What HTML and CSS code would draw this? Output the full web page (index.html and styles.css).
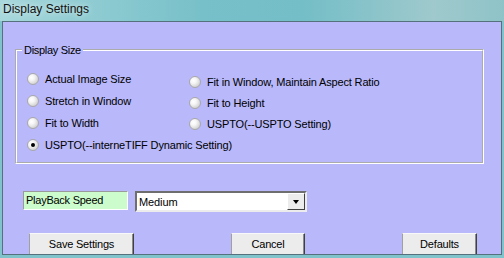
FILE: index.html
```html
<!DOCTYPE html>
<html lang="en">
<head>
    <meta charset="UTF-8">
    <title>Display Settings</title>
    <link rel="stylesheet" href="styles.css">
</head>
<body>
    <div class="window">
        <div class="titlebar">Display Settings</div>
        <div class="client">
            <fieldset class="group">
                <legend>Display Size</legend>
                <div class="options">
                    <div class="col col-left">
                        <label class="opt"><span class="radio"></span>Actual Image Size</label>
                        <label class="opt"><span class="radio"></span>Stretch in Window</label>
                        <label class="opt"><span class="radio"></span>Fit to Width</label>
                        <label class="opt"><span class="radio checked"></span>USPTO(--interneTIFF Dynamic Setting)</label>
                    </div>
                    <div class="col col-right">
                        <label class="opt"><span class="radio"></span>Fit in Window, Maintain Aspect Ratio</label>
                        <label class="opt"><span class="radio"></span>Fit to Height</label>
                        <label class="opt"><span class="radio"></span>USPTO(--USPTO Setting)</label>
                    </div>
                </div>
            </fieldset>

            <div class="speed-row">
                <div class="speed-label">PlayBack Speed</div>
                <div class="combo">
                    <span class="combo-text">Medium</span>
                    <span class="combo-btn"><span class="tri"></span></span>
                </div>
            </div>

            <div class="buttons">
                <button class="btn btn-save">Save Settings</button>
                <button class="btn btn-cancel">Cancel</button>
                <button class="btn btn-defaults">Defaults</button>
            </div>
        </div>
    </div>
</body>
</html>
```

FILE: styles.css
```css
body {
    margin: 0;
    font-family: "Liberation Sans", Arial, sans-serif;
    font-size: 11px;
    color: #000;
}
.window {
    width: 504px;
    height: 258px;
    background: #80c3cb;
    display: flex;
    flex-direction: column;
    overflow: hidden;
}
.titlebar {
    height: 21px;
    line-height: 18px;
    padding-left: 3px;
    font-size: 12px;
    color: #111;
    text-shadow: 0 0 6px rgba(255, 255, 255, 0.8);
    background: linear-gradient(90deg, #a7d8dc 0%, #92cdd3 15%, #78c0c9 40%, #74bec7 60%, #8cc4ca 75%, #9fc9cc 86%, #8ec3c8 100%);
}
.client {
    margin: 0 2px;
    height: 234px;
    box-sizing: border-box;
    border: 1px solid #56717e;
    background: #b8b8fa;
    overflow: hidden;
}
.group {
    margin: 21px 0 0 12px;
    padding: 0;
    width: 469px;
    height: 121px;
    box-sizing: border-box;
    border: 2px groove #fff;
    min-width: 0;
}
.group legend {
    margin-left: 5px;
    padding: 0 2px;
    line-height: 14px;
    letter-spacing: -0.3px;
}
.options {
    display: flex;
    padding-left: 10px;
}
.col {
    display: flex;
    flex-direction: column;
}
.col-left {
    width: 162px;
    padding-top: 15px;
    gap: 8px;
}
.col-right {
    padding-top: 18px;
    gap: 7px;
}
.opt {
    display: flex;
    align-items: center;
    gap: 6px;
    height: 14px;
    white-space: nowrap;
    letter-spacing: -0.15px;
}
.radio {
    flex: none;
    width: 12px;
    height: 12px;
    box-sizing: border-box;
    border-radius: 50%;
    border: 1px solid #a8a8a8;
    background: radial-gradient(circle at 35% 35%, #fff 0, #f6f6f6 30%, #dadada 65%, #bdbdbd 100%);
    display: flex;
    align-items: center;
    justify-content: center;
}
.radio.checked::after {
    content: "";
    width: 4px;
    height: 4px;
    border-radius: 50%;
    background: #000;
}
.speed-row {
    display: flex;
    align-items: flex-start;
    gap: 7px;
    margin: 27px 0 0 20px;
}
.speed-label {
    width: 105px;
    height: 19px;
    box-sizing: border-box;
    padding-left: 2px;
    line-height: 17px;
    background: #ccfccc;
    border: 1px solid;
    border-color: #9a9a9a #fff #fff #9a9a9a;
    letter-spacing: -0.25px;
}
.combo {
    width: 172px;
    height: 21px;
    box-sizing: border-box;
    display: flex;
    align-items: center;
    padding-left: 2px;
    background: #fff;
    border: 2px solid;
    border-color: #6e6e6e #ececec #ececec #6e6e6e;
    letter-spacing: -0.1px;
}
.combo-btn {
    margin-left: auto;
    width: 18px;
    height: 17px;
    box-sizing: border-box;
    display: flex;
    align-items: center;
    justify-content: center;
    background: #ececec;
    border: 1px solid;
    border-color: #fff #404040 #404040 #fff;
}
.tri {
    width: 0;
    height: 0;
    border-left: 3.5px solid transparent;
    border-right: 3.5px solid transparent;
    border-top: 4px solid #000;
}
.buttons {
    display: flex;
    gap: 97px;
    margin-top: 21px;
    padding-left: 26px;
}
.btn {
    height: 22px;
    padding: 0;
    font-family: inherit;
    font-size: 11px;
    letter-spacing: -0.2px;
    color: #000;
    background: #ececec;
    border: 1px solid;
    border-color: #f8f8f8 #404040 #404040 #a0a0a0;
    box-shadow: inset -1px 0 0 #8a8a8a;
}
.btn-save {
    width: 105px;
}
.btn-cancel {
    width: 74px;
}
.btn-defaults {
    width: 75px;
}
```
